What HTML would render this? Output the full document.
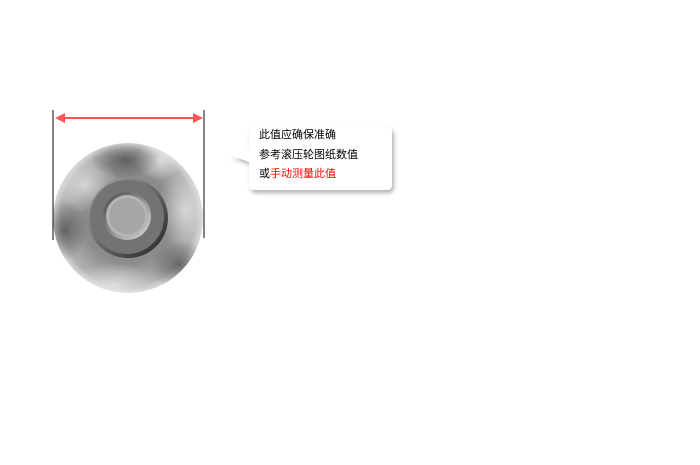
<!DOCTYPE html>
<html><head><meta charset="utf-8"><style>
body{margin:0;width:700px;height:465px;background:#fff;position:relative;overflow:hidden;font-family:"Liberation Sans","Noto Sans CJK SC",sans-serif}
.t{position:absolute;left:259px;font-size:11px;color:#000;line-height:14px}
</style></head><body>
<svg width="700" height="465" style="position:absolute;left:0;top:0">
<defs>
<radialGradient id="w" cx="0.5" cy="0.5" r="0.5">
<stop offset="0" stop-color="#7a7a7a"/><stop offset="0.6" stop-color="#8c8c8c"/><stop offset="0.9" stop-color="#b0b0b0"/><stop offset="1" stop-color="#d8d8d8"/>
</radialGradient>
<radialGradient id="b1" cx="0.5" cy="0.5" r="0.5"><stop offset="0" stop-color="#eee" stop-opacity=".7"/><stop offset="1" stop-color="#eee" stop-opacity="0"/></radialGradient>
<radialGradient id="b2" cx="0.5" cy="0.5" r="0.5"><stop offset="0" stop-color="#444" stop-opacity=".7"/><stop offset="1" stop-color="#444" stop-opacity="0"/></radialGradient>
<linearGradient id="r" x1="0" y1="0" x2="1" y2="1"><stop offset="0" stop-color="#aaa"/><stop offset="0.5" stop-color="#666"/><stop offset="1" stop-color="#222"/></linearGradient>
<linearGradient id="d" x1="0" y1="0" x2="1" y2="1"><stop offset="0" stop-color="#444"/><stop offset="1" stop-color="#ddd"/></linearGradient>
<filter id="s" x="-20%" y="-20%" width="140%" height="150%"><feDropShadow dx="2" dy="3" stdDeviation="2" flood-color="#000" flood-opacity=".3"/></filter>
<clipPath id="c"><circle cx="128" cy="218" r="75"/></clipPath>
</defs>
<circle cx="128" cy="218" r="75" fill="url(#w)"/>
<g clip-path="url(#c)">
<ellipse cx="85" cy="185" rx="35" ry="28" fill="url(#b1)"/>
<ellipse cx="185" cy="210" rx="28" ry="40" fill="url(#b1)"/>
<ellipse cx="115" cy="285" rx="45" ry="22" fill="url(#b1)"/>
<ellipse cx="160" cy="160" rx="25" ry="20" fill="url(#b1)"/>
<ellipse cx="180" cy="265" rx="30" ry="25" fill="url(#b2)"/>
<ellipse cx="65" cy="230" rx="22" ry="30" fill="url(#b2)"/>
<ellipse cx="125" cy="160" rx="35" ry="18" fill="url(#b2)"/>
</g>
<circle cx="128" cy="218" r="40" fill="url(#r)"/>
<circle cx="127" cy="217" r="37" fill="#737373"/>
<circle cx="127" cy="216" r="24" fill="url(#d)"/>
<circle cx="127" cy="216" r="21" fill="#b5b5b5"/>
<circle cx="127" cy="216" r="18" fill="#a6a6a6"/>
<line x1="53" y1="110" x2="53" y2="240" stroke="#333" stroke-width="1.2"/>
<line x1="204" y1="110" x2="204" y2="238" stroke="#333" stroke-width="1.2"/>
<line x1="60" y1="118" x2="198" y2="118" stroke="#f55" stroke-width="2"/>
<polygon points="55,118 65,113 65,123" fill="#f55"/>
<polygon points="203,118 193,113 193,123" fill="#f55"/>
<g filter="url(#s)">
<path d="M254,127 H387 Q392,127 392,132 V185 Q392,190 387,190 H254 Q249,190 249,185 V162 Q240,158 229,156 Q240,155 249,150 V132 Q249,127 254,127 Z" fill="#fff"/>
</g>
</svg>
<div class="t" style="top:128px">此值应确保准确</div>
<div class="t" style="top:148px">参考滚压轮图纸数值</div>
<div class="t" style="top:167px">或<span style="color:#f00">手动测量此值</span></div>
</body></html>
